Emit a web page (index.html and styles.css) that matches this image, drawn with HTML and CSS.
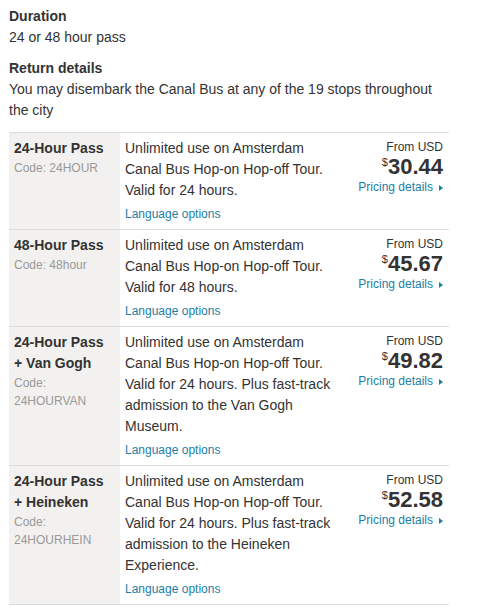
FILE: index.html
```html
<!DOCTYPE html>
<html lang="en">
<head>
    <meta charset="UTF-8">
    <title>Canal Bus Pass</title>
    <link rel="stylesheet" href="styles.css">
</head>
<body>
    <div class="tour">
        <h3 class="tour__label">Duration</h3>
        <p class="tour__text">24 or 48 hour pass</p>
        <h3 class="tour__label tour__label--next">Return details</h3>
        <p class="tour__text">You may disembark the Canal Bus at any of the 19 stops throughout the city</p>

        <table class="options">
            <tr>
                <td class="options__name">
                    <div class="options__title">24-Hour Pass</div>
                    <div class="options__code">Code: 24HOUR</div>
                </td>
                <td class="options__desc">
                    <p class="options__text">Unlimited use on Amsterdam Canal Bus Hop-on Hop-off Tour. Valid for 24 hours.</p>
                    <a href="#" class="options__lang">Language options</a>
                </td>
                <td class="options__price">
                    <div class="options__from">From USD</div>
                    <div class="options__amount"><sup>$</sup>30.44</div>
                    <a href="#" class="options__details">Pricing details</a>
                </td>
            </tr>
            <tr>
                <td class="options__name">
                    <div class="options__title">48-Hour Pass</div>
                    <div class="options__code">Code: 48hour</div>
                </td>
                <td class="options__desc">
                    <p class="options__text">Unlimited use on Amsterdam Canal Bus Hop-on Hop-off Tour. Valid for 48 hours.</p>
                    <a href="#" class="options__lang">Language options</a>
                </td>
                <td class="options__price">
                    <div class="options__from">From USD</div>
                    <div class="options__amount"><sup>$</sup>45.67</div>
                    <a href="#" class="options__details">Pricing details</a>
                </td>
            </tr>
            <tr>
                <td class="options__name">
                    <div class="options__title">24-Hour Pass + Van Gogh</div>
                    <div class="options__code">Code: 24HOURVAN</div>
                </td>
                <td class="options__desc">
                    <p class="options__text">Unlimited use on Amsterdam Canal Bus Hop-on Hop-off Tour. Valid for 24 hours. Plus fast-track admission to the Van Gogh Museum.</p>
                    <a href="#" class="options__lang">Language options</a>
                </td>
                <td class="options__price">
                    <div class="options__from">From USD</div>
                    <div class="options__amount"><sup>$</sup>49.82</div>
                    <a href="#" class="options__details">Pricing details</a>
                </td>
            </tr>
            <tr>
                <td class="options__name">
                    <div class="options__title">24-Hour Pass + Heineken</div>
                    <div class="options__code">Code: 24HOURHEIN</div>
                </td>
                <td class="options__desc">
                    <p class="options__text">Unlimited use on Amsterdam Canal Bus Hop-on Hop-off Tour. Valid for 24 hours. Plus fast-track admission to the Heineken Experience.</p>
                    <a href="#" class="options__lang">Language options</a>
                </td>
                <td class="options__price">
                    <div class="options__from">From USD</div>
                    <div class="options__amount"><sup>$</sup>52.58</div>
                    <a href="#" class="options__details">Pricing details</a>
                </td>
            </tr>
        </table>
    </div>
</body>
</html>
```

FILE: styles.css
```css
body{
    margin: 0;
    background: #fff;
    color: #333;
    font-family: "Liberation Sans", Arial, sans-serif;
    font-size: 14px;
    line-height: 21px;
}
.tour{
    width: 440px;
    padding: 6px 9px;
}
.tour .tour__label{
    margin: 0;
    font-size: 14px;
    font-weight: bold;
}
.tour .tour__label--next{
    margin-top: 10px;
}
.tour .tour__text{
    margin: 0;
}
.options{
    width: 440px;
    margin-top: 11px;
    border-collapse: collapse;
}
.options td{
    vertical-align: top;
    border-top: 1px solid #dcdcdc;
    border-bottom: 1px solid #dcdcdc;
    padding: 5px 4px 6px 5px;
}
.options .options__name{
    width: 96px;
    padding-right: 10px;
    background: #f2f1ef;
}
.options__title{
    font-weight: bold;
}
.options__code{
    color: #999;
    font-size: 12px;
    line-height: 18px;
}
.options .options__desc{
    width: 215px;
    padding-right: 5px;
}
.options__text{
    margin: 0 0 4px 0;
}
.options__lang,
.options__details{
    display: block;
    color: #1a7ea6;
    font-size: 12px;
    line-height: 18px;
    text-decoration: none;
}
.options .options__price{
    text-align: right;
    padding-right: 6px;
    padding-left: 0;
}
.options__from{
    font-size: 12px;
    line-height: 18px;
}
.options__amount{
    font-size: 22px;
    font-weight: bold;
    line-height: 22px;
}
.options__amount sup{
    font-size: 11px;
    font-weight: normal;
    vertical-align: top;
    line-height: 12px;
}
.options__details:after{
    content: "";
    display: inline-block;
    margin-left: 6px;
    border-left: 4px solid #1a7ea6;
    border-top: 3.5px solid transparent;
    border-bottom: 3.5px solid transparent;
}
```
